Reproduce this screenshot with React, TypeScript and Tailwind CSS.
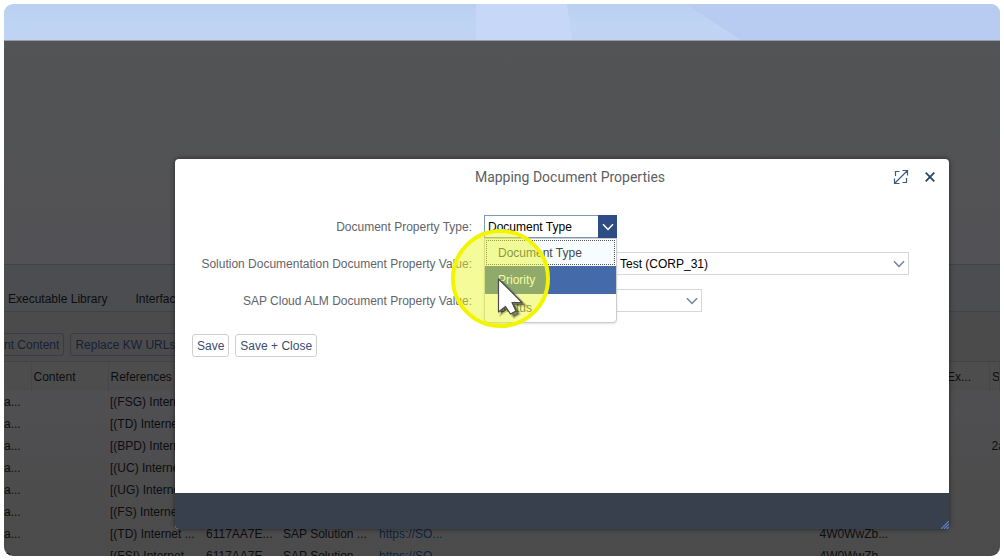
import { ReactNode } from "react";

const rows = [
  { ref: "[(FSG) Internet ...", last: "" },
  { ref: "[(TD) Internet ...", last: "" },
  { ref: "[(BPD) Internet ...", last: "2a..." },
  { ref: "[(UC) Internet ...", last: "" },
  { ref: "[(UG) Internet ...", last: "" },
  { ref: "[(FS) Internet ...", last: "" },
  { ref: "[(TD) Internet ...", last: "" },
  { ref: "[(FSI) Internet ...", last: "" },
];

function Chevron({ className }: { className: string }) {
  return (
    <svg className={className} width="12" height="8" viewBox="0 0 12 8" fill="none" stroke="currentColor" strokeWidth="1.5">
      <path d="M1 1.2 6 6.4 11 1.2" />
    </svg>
  );
}

function Field({ id, label, children }: { id: string; label: string; children: ReactNode }) {
  return (
    <>
      <label htmlFor={id} className="whitespace-nowrap text-right text-[#62656a]">
        {label}
      </label>
      <div className="min-w-0">{children}</div>
    </>
  );
}

function Landscape() {
  return (
    <svg className="h-9 w-full shrink-0" viewBox="0 0 996 36" preserveAspectRatio="none" aria-hidden="true">
      <defs>
        <linearGradient id="sky" x1="0" y1="0" x2="0" y2="1">
          <stop offset="0" stopColor="#bad0f1" />
          <stop offset="0.65" stopColor="#bfd5f4" />
          <stop offset="1" stopColor="#c2d1f3" />
        </linearGradient>
      </defs>
      <path d="M0 0H996V36H0Z" fill="url(#sky)" />
      <path d="M472 0H563L568 36H472Z" fill="#c7d7f8" />
      <path d="M682 0H996V36H737Z" fill="#b8cbf0" />
    </svg>
  );
}

function Background() {
  return (
    <div className="flex flex-1 flex-col overflow-hidden border-t border-[#9a9da3] bg-linear-to-b from-[#525455] via-[#525155] to-[#4b4b4b] text-xs whitespace-nowrap text-[#0c0d0f]">
      <div className="h-[223px] shrink-0" />
      <nav className="flex h-12 shrink-0 items-end gap-7 border-y border-[#404246] bg-[#4b4d50] px-1 pb-1">
        <a href="#library" className="leading-4">Executable Library</a>
        <a href="#interfaces" className="leading-4">Interfaces</a>
      </nav>
      <div className="flex h-[50px] shrink-0 items-end gap-1.5 border-b border-[#424344] bg-[#4b4b4c] pb-[5px]">
        <button className="h-[23px] rounded-r-[3px] border border-l-0 border-[#393d45] pr-1 text-[#161f38]">nt Content</button>
        <button className="h-[23px] rounded-[3px] border border-[#393d45] px-1 text-[#161f38]">Replace KW URLs</button>
      </div>
      <table className="w-full table-fixed border-collapse text-left">
        <colgroup>
          <col className="w-[27px]" />
          <col className="w-[77px]" />
          <col className="w-[96px]" />
          <col className="w-[77px]" />
          <col className="w-[96px]" />
          <col />
          <col className="w-[127px]" />
          <col className="w-[45px]" />
          <col className="w-[10px]" />
        </colgroup>
        <thead>
          <tr className="h-[29px] bg-[#4d4d4e] [&>th]:overflow-hidden [&>th]:border-r [&>th]:border-[#464747] [&>th]:px-0.5 [&>th]:font-normal">
            <th />
            <th>Content</th>
            <th>References</th>
            <th />
            <th />
            <th />
            <th />
            <th>Ex...</th>
            <th>So...</th>
          </tr>
        </thead>
        <tbody>
          {rows.map((row, i) => (
            <tr key={i} className="h-[22px] [&>td]:overflow-hidden [&>td]:py-0 [&>td]:pl-0.5">
              <td><span className="-ml-0.5">a...</span></td>
              <td />
              <td>{row.ref}</td>
              <td>6117AA7E...</td>
              <td>SAP Solution ...</td>
              <td><a href="#document" className="text-[#0b2340]">https://SO...</a></td>
              <td>4W0WwZb...</td>
              <td />
              <td>{row.last}</td>
            </tr>
          ))}
        </tbody>
      </table>
    </div>
  );
}

function Highlight() {
  return (
    <svg className="pointer-events-none absolute top-3 -left-[35px] z-20" width="104" height="104" viewBox="0 0 104 104" aria-hidden="true">
      <circle cx="51.5" cy="51.5" r="47.5" fill="#eaf620" fillOpacity="0.46" stroke="#f1f500" strokeWidth="4" />
      <path d="M52 54V87L59 82L65 90L70 87L66 78H76Z" fill="#111" fillOpacity="0.5" stroke="#111" strokeOpacity="0.2" strokeWidth="3" />
      <path d="M49.5 52V85L56.5 79.5L61.5 87L67 84L63 75.500H73Z" fill="#fff" stroke="#4a4a50" strokeWidth="1.2" strokeLinejoin="round" />
    </svg>
  );
}

function Dialog() {
  return (
    <section role="dialog" aria-label="Mapping Document Properties" className="absolute top-[155px] right-[51px] left-[171px] flex flex-col rounded-[4px] bg-white text-xs shadow-[0_0_5px_rgba(0,0,0,0.55)]">
      <header className="flex h-9 items-center pr-[9px] pl-3">
        <h1 className="flex-1 pl-[62px] text-center font-[Roboto,sans-serif] text-sm text-[#5c5f64]">Mapping Document Properties</h1>
        <div className="flex items-center gap-[9px] text-[#3c5884]">
          <button aria-label="Full screen" className="flex size-5 items-center justify-center">
            <svg width="16" height="16" viewBox="0 0 16 16" fill="none" stroke="currentColor" strokeWidth="1.2">
              <path d="M2 14 14 2M9.500 1.500H14.500V6.500M1.500 9.500V14.500H6.500M6.500 2.500H2.500V7M13.500 9V13.500H9.500" />
            </svg>
          </button>
          <button aria-label="Close" className="flex size-5 items-center justify-center">
            <svg width="10" height="10" viewBox="0 0 10 10" fill="none" stroke="#24416e" strokeWidth="1.7">
              <path d="M.7.7 9.3 9.3M9.3.7.7 9.3" />
            </svg>
          </button>
        </div>
      </header>
      <div className="pt-5 pr-10 pb-[136px]">
        <div className="grid grid-cols-[297px_1fr] items-center gap-x-3 gap-y-3.5">
          <Field id="type" label="Document Property Type:">
            <div className="relative w-[133px]">
              <select id="type" className="block h-[23px] w-full appearance-none border border-[#7c9bb8] bg-white px-[3px] text-black">
                <option>Document Type</option>
                <option>Priority</option>
                <option>Status</option>
              </select>
              <span className="pointer-events-none absolute top-0 right-0 flex h-[23px] w-[19px] items-center justify-center bg-[#2f4d85] text-white">
                <Chevron className="" />
              </span>
              <ul role="listbox" aria-label="Document Property Type" className="absolute top-[23px] left-0 z-10 w-full rounded-b-[4px] border border-[#c9ccd1] bg-white text-[#43474d] shadow-sm">
                <li role="option" aria-selected="false" className="m-px flex h-[25px] items-center border border-dotted border-[#555] bg-[#f7fdff] pl-[11px]">Document Type</li>
                <li role="option" aria-selected="true" className="flex h-7 items-center bg-[#456aaa] pl-[13px] text-white">Priority</li>
                <li role="option" aria-selected="false" className="flex h-7 items-center pl-[13px]">Status</li>
              </ul>
              <Highlight />
            </div>
          </Field>
          <Field id="source" label="Solution Documentation Document Property Value:">
            <div className="relative">
              <select id="source" className="block h-[23px] w-full appearance-none border border-[#d5d7da] bg-white pl-[135px] text-black">
                <option>Test (CORP_31)</option>
              </select>
              <Chevron className="pointer-events-none absolute top-2 right-1 text-[#7182a4]" />
            </div>
          </Field>
          <Field id="target" label="SAP Cloud ALM Document Property Value:">
            <div className="relative w-[218px]">
              <select id="target" className="block h-[23px] w-full appearance-none border border-[#d5d7da] bg-white" />
              <Chevron className="pointer-events-none absolute top-2 right-1 text-[#7182a4]" />
            </div>
          </Field>
        </div>
        <div className="mt-[22px] flex gap-1.5 pl-[17px] text-[#3b4c70]">
          <button className="h-[23px] rounded-[3px] border border-[#cdcfd3] px-1">Save</button>
          <button className="h-[23px] rounded-[3px] border border-[#cdcfd3] px-1">Save + Close</button>
        </div>
      </div>
      <footer className="flex h-9 items-end justify-end rounded-bl-[4px] bg-[#383f4d]">
        <svg width="8" height="8" viewBox="0 0 8 8" fill="none" stroke="#5c82c8" strokeWidth="1.2" aria-hidden="true">
          <path d="M0 8 8 0M3 8 8 3M6 8 8 6" />
        </svg>
      </footer>
    </section>
  );
}

export default function App() {
  return (
    <main className="flex h-screen bg-white px-1 py-1 font-['Liberation_Sans',sans-serif]">
      <div className="relative flex min-w-0 flex-1 flex-col overflow-hidden rounded-[9px]">
        <Landscape />
        <Background />
        <Dialog />
      </div>
    </main>
  );
}
